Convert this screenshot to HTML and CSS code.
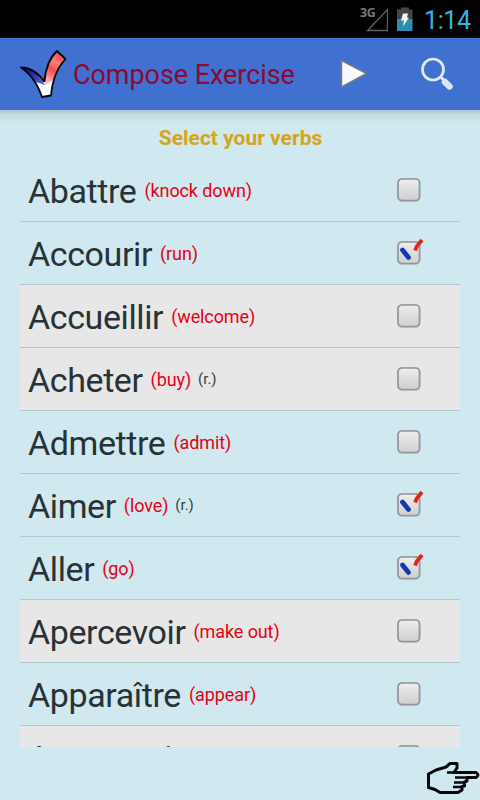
FILE: index.html
```
<!DOCTYPE html>
<html lang="en">
<head>
<meta charset="utf-8">
<title>Compose Exercise</title>
<link rel="stylesheet" href="styles.css">
</head>
<body>
<svg width="0" height="0" class="defs">
  <defs>
    <linearGradient id="boxFill" x1="0" y1="0" x2="0" y2="1"><stop offset="0" stop-color="#f0eeef"/><stop offset="0.5" stop-color="#dedede"/><stop offset="1" stop-color="#cfcfcf"/></linearGradient>
    <symbol id="box" viewBox="0 0 32 32">
      <rect x="4" y="4" width="23.500" height="24" rx="5" fill="#8f9ba0" opacity=".4"/>
      <rect x="5" y="5" width="21.500" height="21.500" rx="4" fill="url(#boxFill)" stroke="#92989b" stroke-width="1.700"/>
    </symbol>
    <symbol id="box-on" viewBox="0 0 32 32">
      <use href="#box"/>
      <path d="M9.500 13L15.500 20.500" stroke="#1238b4" stroke-width="4.800" stroke-linecap="round"/>
      <path d="M22 13.500L24 9L29 3" fill="none" stroke="#de241c" stroke-width="3.800"/>
    </symbol>
  </defs>
</svg>
<div class="screen">
  <div class="status">
    <svg class="signal" width="28" height="26" viewBox="0 0 28 26"><path d="M7.500 23.500H27.500V2.500Z" fill="none" stroke="#626262" stroke-width="1.300"/></svg>
    <span class="net">3G</span>
    <svg class="battery" width="16" height="24" viewBox="0 0 16 24"><path d="M0 2.500h4V.5h8v2h3.500V12H0z" fill="#454545"/><path d="M0 12h15.500v12H0z" fill="#2b8eac"/><path d="M6 6.500h5l-1 4h2l-6 9 1-6H4z" fill="#f4f4f4"/></svg>
    <span class="clock">1:14</span>
  </div>
  <header class="bar">
    <svg class="logo" width="48" height="50" viewBox="0 0 48 50">
      <defs>
        <linearGradient id="red" x1=".7" y1="0" x2=".3" y2="1"><stop offset="0" stop-color="#f8403c"/><stop offset=".35" stop-color="#ff8078"/><stop offset=".6" stop-color="#f84a48"/><stop offset="1" stop-color="#ffc0bc"/></linearGradient>
        <linearGradient id="blue" x1="0" y1="0" x2="1" y2=".8"><stop offset="0" stop-color="#101060"/><stop offset=".5" stop-color="#2c2cb8"/><stop offset="1" stop-color="#5a5ad8"/></linearGradient>
      </defs>
      <path d="M1 18.500Q15 19 24.500 33Q26 12 37 2L45.500 10Q33 23 31 46.500L22 48Q18 37 14 31.500Q9 24 1 18.500Z" fill="#fff"/>
      <path d="M1 18.500Q15 19 25 36L14.500 32.500Q9 24 1 18.500Z" fill="url(#blue)"/>
      <path d="M25 36Q26 12 37 2L45.500 10Q36 20 33 31Z" fill="url(#red)"/>
      <path d="M24.500 33Q26 12 37 2L45.500 10Q33 23 31 46.500L22 48Q18 37 14 31.500Q9 24 1 18.500Q15 19 24.500 33" fill="none" stroke="#080808" stroke-width="1.800" stroke-linejoin="round"/>
    </svg>
    <h1>Compose Exercise</h1>
    <svg class="play" width="28" height="30" viewBox="0 0 28 30"><path d="M1.500 1.500V28L26.500 14.500Z" fill="#fafafa" stroke="#777b88" stroke-width="1.500"/></svg>
    <svg class="search" width="36" height="36" viewBox="0 0 36 36"><circle cx="13" cy="13.500" r="10.500" fill="none" stroke="#e1e8f4" stroke-width="2.700"/><path d="M20.500 21l4.500 4" stroke="#dde5f2" stroke-width="3"/><path d="M25 26l4.500 4.500" stroke="#dde5f2" stroke-width="6.500" stroke-linecap="round"/></svg>
  </header>
  <main>
    <h2>Select your verbs</h2>
    <ul>
      <li><b>Abattre</b><i>(knock down)</i><svg><use href="#box"/></svg></li>
      <li><b>Accourir</b><i>(run)</i><svg><use href="#box-on"/></svg></li>
      <li class="alt"><b>Accueillir</b><i>(welcome)</i><svg><use href="#box"/></svg></li>
      <li class="alt"><b>Acheter</b><i>(buy)</i><small>(r.)</small><svg><use href="#box"/></svg></li>
      <li><b>Admettre</b><i>(admit)</i><svg><use href="#box"/></svg></li>
      <li><b>Aimer</b><i>(love)</i><small>(r.)</small><svg><use href="#box-on"/></svg></li>
      <li><b>Aller</b><i>(go)</i><svg><use href="#box-on"/></svg></li>
      <li class="alt"><b>Apercevoir</b><i>(make out)</i><svg><use href="#box"/></svg></li>
      <li><b>Apparaître</b><i>(appear)</i><svg><use href="#box"/></svg></li>
      <li class="alt"><b>Appartenir</b><svg><use href="#box"/></svg></li>
    </ul>
  </main>
  <footer>
    <svg width="54" height="34" viewBox="0 0 54 34"><path d="M2.500 13L10 9L20 6L24 2.500H31V7L28 11.500H50Q54 14 50 16.500H41V20L38.500 21V25L36 25.500V29L32 31.500H14L9 28.500L2.500 26.500Z" fill="#d0e8ef" stroke="#080808" stroke-width="3" stroke-linejoin="round"/><path d="M21 11.500h8M29 16.500h12M28 21.500h11M27 26h9" stroke="#080808" stroke-width="2.500"/></svg>
  </footer>
</div>
</body>
</html>
```
FILE: styles.css
```
* { box-sizing: border-box; }
body { margin: 0; font-family: Roboto, sans-serif; background: #d0e8ef; }
.defs { display: block; position: absolute; }
.screen { width: 480px; height: 800px; overflow: hidden; display: flex; flex-direction: column; }
.status { position: relative; height: 38px; flex: none; background: #000; display: flex; justify-content: flex-end; align-items: center; padding-right: 9px; }
.net { position: absolute; left: 360px; top: 5px; font: bold 12.5px/15px "Open Sans", sans-serif; letter-spacing: -0.5px; color: #777; }
.signal { margin-right: 9px; margin-top: 1px; }
.battery { margin-right: 11px; margin-top: -1px; }
.clock { font-size: 25px; line-height: 38px; padding-top: 3px; letter-spacing: -0.4px; color: #33b5e5; width: 47px; white-space: nowrap; }
.bar { height: 72px; flex: none; background: #4070d0; display: flex; align-items: center; padding-left: 20px; }
.logo { margin-right: 5px; }
h1 { margin: 0; padding-top: 2px; width: 222px; font-size: 27px; letter-spacing: -0.06px; font-weight: 400; color: #8b0a32; white-space: nowrap; }
.play { margin-left: 45px; }
.search { margin-left: 52px; }
main { height: 637px; flex: none; overflow: hidden; padding: 0 20px; background: linear-gradient(#abc0ca, #c4dae2 4px, #d0e8ef 13px); }
h2 { margin: 0; height: 49px; padding: 15px 0 0 1px; font-size: 21px; line-height: 26px; font-weight: 700; text-align: center; color: #d4a51c; }
ul { margin: 0; padding: 0; list-style: none; }
li { height: 63px; padding: 0 35px 0 8px; border-bottom: 1px solid #b3c8cf; display: flex; align-items: center; }
li.alt { background: #e7e7e7; }
b { font-size: 34px; font-weight: 400; letter-spacing: -0.4px; color: #283236; line-height: 62px; padding-top: 2px; }
i { font-size: 18px; font-style: normal; letter-spacing: -0.1px; color: #e60012; margin-left: 8px; }
small { font-size: 15px; color: #353f43; margin-left: 7px; margin-top: -1px; }
li svg { width: 32px; height: 32px; margin-left: auto; margin-top: -1px; }
footer { display: flex; justify-content: flex-end; padding-top: 14px; }
```
